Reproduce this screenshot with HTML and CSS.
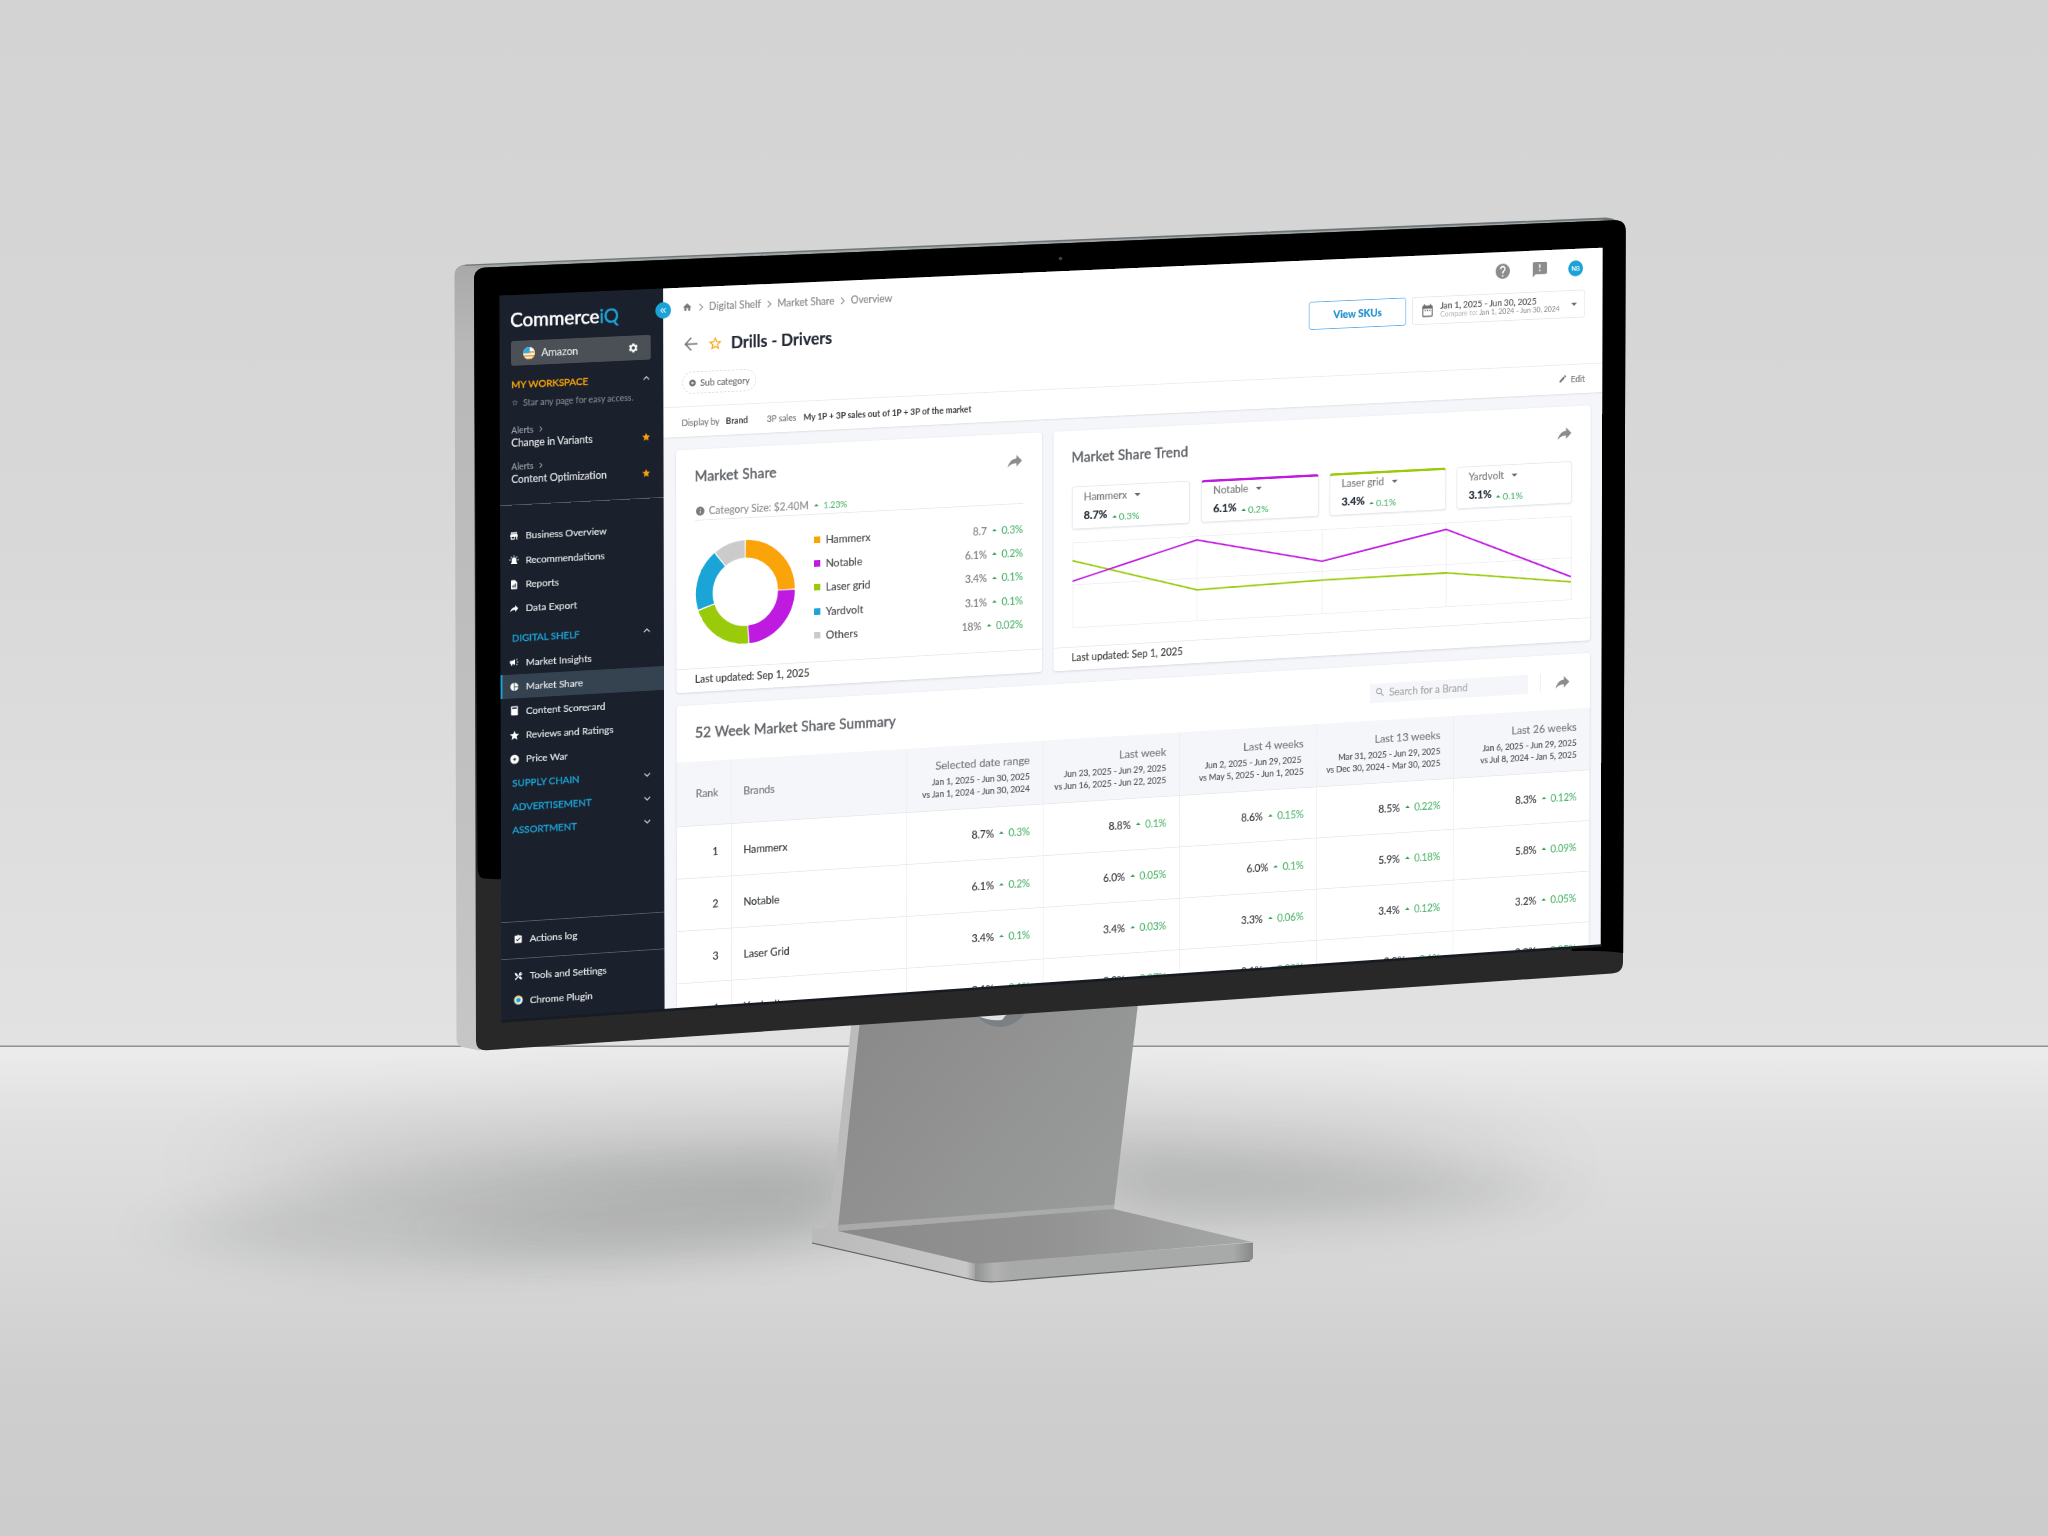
FILE: index.html
```html
<!DOCTYPE html>
<html lang="en">
<head>
    <meta charset="UTF-8">
    <meta name="viewport" content="width=device-width, initial-scale=1.0">
    <title>CommerceIQ - Market Share</title>
    <link rel="stylesheet" href="styles.css">
</head>
<body>
    <!-- shared icons -->
    <svg class="sprite">
        <symbol id="i-share" viewBox="0 0 24 24"><path d="M14 9V5l7 7-7 7v-4.1c-5 0-8.5 1.6-11 5.1 1-5 4-10 11-11z"/></symbol>
        <symbol id="i-star" viewBox="0 0 24 24"><path d="M12 17.27L18.18 21l-1.64-7.03L22 9.24l-7.19-.61L12 2 9.19 8.63 2 9.24l5.46 4.73L5.82 21z"/></symbol>
        <symbol id="i-star-o" viewBox="0 0 24 24"><path d="M22 9.24l-7.19-.62L12 2 9.19 8.63 2 9.24l5.46 4.73L5.82 21 12 17.27 18.18 21l-1.63-7.03L22 9.24zM12 15.4l-3.76 2.27 1-4.28-3.32-2.88 4.38-.38L12 6.1l1.71 4.04 4.38.38-3.32 2.88 1 4.28L12 15.4z"/></symbol>
        <symbol id="i-plus" viewBox="0 0 24 24"><path d="M12 2C6.48 2 2 6.48 2 12s4.48 10 10 10 10-4.48 10-10S17.52 2 12 2zm5 11h-4v4h-2v-4H7v-2h4V7h2v4h4v2z"/></symbol>
        <symbol id="i-right" viewBox="0 0 24 24"><path d="M8 4l8 8-8 8" fill="none" stroke="currentColor" stroke-width="2.4"/></symbol>
        <symbol id="i-up" viewBox="0 0 24 24"><path d="M4 16l8-8 8 8" fill="none" stroke="currentColor" stroke-width="3"/></symbol>
        <symbol id="i-down" viewBox="0 0 24 24"><path d="M4 8l8 8 8-8" fill="none" stroke="currentColor" stroke-width="3"/></symbol>
    </svg>

    <div class="scene">
        <svg class="monitor" viewBox="0 0 2048 1536">
            <defs>
                <linearGradient id="wall" x1="0" y1="0" x2="0" y2="1">
                    <stop offset="0" stop-color="#d3d3d3"/>
                    <stop offset=".5" stop-color="#d8d8d8"/>
                    <stop offset="1" stop-color="#e2e2e2"/>
                </linearGradient>
                <linearGradient id="floor" x1="0" y1="0" x2="0" y2="1">
                    <stop offset="0" stop-color="#ececec"/>
                    <stop offset=".15" stop-color="#e0e0e0"/>
                    <stop offset=".45" stop-color="#d7d7d7"/>
                    <stop offset=".7" stop-color="#cecece"/>
                    <stop offset="1" stop-color="#cccccc"/>
                </linearGradient>
                <linearGradient id="side" x1="0" y1="0" x2="0" y2="1">
                    <stop offset="0" stop-color="#a9a9a9"/>
                    <stop offset=".1" stop-color="#b8b8b8"/>
                    <stop offset="1" stop-color="#c6c6c6"/>
                </linearGradient>
                <linearGradient id="neck" x1="0" y1="0" x2="1" y2=".6">
                    <stop offset="0" stop-color="#888888"/>
                    <stop offset=".5" stop-color="#919191"/>
                    <stop offset="1" stop-color="#989b9a"/>
                </linearGradient>
                <linearGradient id="foot" x1="0" y1="0" x2="1" y2="0">
                    <stop offset="0" stop-color="#8a8a8a"/>
                    <stop offset=".5" stop-color="#929292"/>
                    <stop offset="1" stop-color="#a6a8a7"/>
                </linearGradient>
                <linearGradient id="footSide" x1="0" y1="0" x2="1" y2="0">
                    <stop offset="0" stop-color="#b9b9b9"/>
                    <stop offset=".92" stop-color="#c8c8c8"/>
                    <stop offset="1" stop-color="#8e8e8e"/>
                </linearGradient>
                <linearGradient id="footFront" x1="0" y1="0" x2="1" y2="0">
                    <stop offset="0" stop-color="#909191"/>
                    <stop offset=".07" stop-color="#b2b3b2"/>
                    <stop offset=".13" stop-color="#a8aaa9"/>
                    <stop offset=".93" stop-color="#a8aaa9"/>
                    <stop offset="1" stop-color="#868888"/>
                </linearGradient>
                <filter id="soft" x="-30%" y="-80%" width="160%" height="260%"><feGaussianBlur stdDeviation="40 20"/></filter>
                <filter id="softer" x="-30%" y="-120%" width="160%" height="340%"><feGaussianBlur stdDeviation="70 40"/></filter>
            </defs>

            <rect width="2048" height="1047" fill="url(#wall)"/>
            <rect y="1046" width="2048" height="490" fill="url(#floor)"/>
            <rect y="1045.5" width="2048" height="1.5" fill="#8f9090"/>

            <!-- floor shadows -->
            <ellipse cx="880" cy="1165" rx="640" ry="55" fill="#000" opacity=".1" filter="url(#softer)"/>
            <path d="M160 1230C300 1180 600 1140 860 1155L850 1235C640 1280 260 1290 160 1230z" fill="#2a3030" opacity=".11" filter="url(#soft)"/>
            <path d="M420 1235C560 1190 700 1165 850 1170L840 1235C700 1255 520 1270 420 1235z" fill="#2a3030" opacity=".07" filter="url(#soft)"/>
            <path d="M1090 1150C1250 1150 1450 1170 1580 1190C1450 1215 1280 1220 1130 1220z" fill="#2a3030" opacity=".12" filter="url(#soft)"/>

            <!-- stand -->
            <path d="M852 1018L861 1018L838 1232L976 1264V1280L812 1243V1227Q828 1232 830 1216z" fill="#bbbcbb"/>
            <path d="M812.5 1226.5V1243L970 1279Q976 1280.5 980 1280V1264L838 1230Q829 1224 826 1228Q820 1232 812.5 1226.5z" fill="url(#footSide)"/>
            <path d="M861 1010L1139 995L1114 1208L838 1228z" fill="url(#neck)"/>
            <path d="M838 1225L1114 1204.5V1209.5L838 1231z" fill="#a9abaa"/>
            <path d="M838 1231L1114 1209L1252 1242L990 1264Q980 1265 972 1263z" fill="url(#foot)"/>
            <path d="M975 1264L1253 1242.5V1257Q1253 1260 1248 1261L1000 1281.5Q984 1282.5 975 1280z" fill="url(#footFront)"/>
            <path d="M812 1243L976 1280.5Q985 1282.5 1000 1281.5L1250 1261" fill="none" stroke="#5c6162" stroke-width="1.2"/>
            <path d="M976 1014Q985 1027 1000 1027Q1016 1026 1026 1012z" fill="#7b8084"/>
            <path d="M976 1015Q986 1021 1002 1020L1010 1010z" fill="#e2e2e2"/>

            <!-- body -->
            <path d="M474 268L455 274Q455 266 466 264.5L1606 217.5Q1612 217.5 1618 221z" fill="#6f767b"/>
            <path d="M480 268L462 268L466 265.8L1600 219.5L1618 221.5z" fill="#a0a4a4"/>
            <path d="M454.5 275Q455 266 464 265.5L482 268.5L480 1050.5L462 1047Q456.5 1045 456.5 1039z" fill="url(#side)"/>
            <path d="M486 267.5L1614 220.3Q1625.7 219.8 1625.7 231L1623 962Q1623 972.5 1612 973.5L487 1050.3Q476 1051 476 1041L474 280Q474 268 486 267.5z" fill="#282828"/>
            <path d="M486 267.5L1614 220.3Q1625.7 219.8 1625.7 231L1623.2 953Q1600 950 1572 951L1560 900L502 870L502 879.5L484 878.5Q478 878 477.5 868L474 280Q474 268 486 267.5z" fill="#000"/>
            <circle cx="1060.5" cy="258.5" r="1.8" fill="#3b414b"/>
        </svg>

        <div class="screen">
            <aside class="sidebar">
                <div class="logo">Commerce<span>iQ</span></div>
                <div class="account">
                    <svg class="flag" viewBox="0 0 14 14"><clipPath id="round"><circle cx="7" cy="7" r="7"/></clipPath><g clip-path="url(#round)"><rect width="14" height="14" fill="#fff"/><path d="M0 5h14v2H0zM0 9h14v2H0zM0 12.5h14V14H0z" fill="#f2a12b"/><path d="M0 0h8v7H0z" fill="#35a7dc"/></g></svg>
                    <span>Amazon</span>
                    <svg class="gear" viewBox="0 0 24 24"><path d="M19.14 12.94c.04-.3.06-.61.06-.94 0-.32-.02-.64-.07-.94l2.03-1.58c.18-.14.23-.41.12-.61l-1.92-3.32c-.12-.22-.37-.29-.59-.22l-2.39.96c-.5-.38-1.03-.7-1.62-.94l-.36-2.54c-.04-.24-.24-.41-.48-.41h-3.84c-.24 0-.43.17-.47.41l-.36 2.54c-.59.24-1.13.57-1.62.94l-2.39-.96c-.22-.08-.47 0-.59.22L2.74 8.87c-.12.21-.08.47.12.61l2.03 1.58c-.05.3-.09.63-.09.94s.02.64.07.94l-2.03 1.58c-.18.14-.23.41-.12.61l1.92 3.32c.12.22.37.29.59.22l2.39-.96c.5.38 1.03.7 1.62.94l.36 2.54c.05.24.24.41.48.41h3.84c.24 0 .44-.17.47-.41l.36-2.54c.59-.24 1.13-.56 1.62-.94l2.39.96c.22.08.47 0 .59-.22l1.92-3.32c.12-.22.07-.47-.12-.61l-2.01-1.58zM12 15.6c-1.98 0-3.6-1.62-3.6-3.6s1.62-3.6 3.6-3.6 3.6 1.62 3.6 3.6-1.62 3.6-3.6 3.6z"/></svg>
                </div>
                <div class="section workspace"><span>MY WORKSPACE</span><svg class="chev"><use href="#i-up"/></svg></div>
                <div class="hint"><svg><use href="#i-star-o"/></svg>Star any page for easy access.</div>
                <div class="fav">
                    <div class="crumb">Alerts <svg><use href="#i-right"/></svg></div>
                    <div class="fav-name">Change in Variants <svg><use href="#i-star"/></svg></div>
                </div>
                <div class="fav">
                    <div class="crumb">Alerts <svg><use href="#i-right"/></svg></div>
                    <div class="fav-name">Content Optimization <svg><use href="#i-star"/></svg></div>
                </div>
                <nav class="nav top">
                    <a><svg viewBox="0 0 24 24"><path d="M20 3H4v3h16V3zm1.5 11v-2l-1-5h-17l-1 5v2h1v7h10v-7h4v7h3v-7h1zM12 18H6v-4h6v4z"/></svg>Business Overview</a>
                    <a><svg viewBox="0 0 24 24"><path d="M6 19v-7a6 6 0 0 1 12 0v7h2v3H4v-3zM11 1h2v3.5h-2zM3 5l1.5-1.5 2.5 2.5L5.5 7.5zM21 5l-1.5-1.5L17 6l1.5 1.5zM0 11h3.5v2H0zM20.5 11H24v2h-3.5z"/></svg>Recommendations</a>
                    <a><svg viewBox="0 0 24 24"><path fill-rule="evenodd" d="M6 1h8l6 6v14a2 2 0 0 1-2 2H6a2 2 0 0 1-2-2V3a2 2 0 0 1 2-2zM7.5 14v5h2v-5zM11 11.5V19h2v-7.5zM14.5 9v10h2V9z"/></svg>Reports</a>
                    <a><svg class="export"><use href="#i-share"/></svg>Data Export</a>
                </nav>
                <div class="section shelf"><span>DIGITAL SHELF</span><svg class="chev"><use href="#i-up"/></svg></div>
                <nav class="nav">
                    <a><svg viewBox="0 0 24 24"><path d="M18 11v2h4v-2h-4zm-2 6.61c.96.71 2.21 1.65 3.2 2.39l1.2-1.6-3.2-2.4-1.2 1.61zM20.4 5.6L19.2 4c-.99.74-2.24 1.68-3.2 2.4l1.2 1.6 3.2-2.4zM1 8.500v7h2.500V20h3.500v-4.500l7 3.500V5L7 8.500z"/></svg>Market Insights</a>
                    <a class="active"><svg viewBox="0 0 24 24"><path d="M11 2v20c-5.070-.5-9-4.790-9-10s3.930-9.500 9-10zm2.030 0v8.990H22c-.47-4.740-4.240-8.520-8.970-8.990zm0 11.010V22c4.740-.47 8.500-4.250 8.970-8.990h-8.970z"/></svg>Market Share</a>
                    <a><svg viewBox="0 0 24 24"><path fill-rule="evenodd" d="M5 1h14a1.500 1.500 0 0 1 1.500 1.500v19A1.500 1.500 0 0 1 19 23H5a1.500 1.500 0 0 1-1.500-1.500v-19A1.500 1.500 0 0 1 5 1zM6.500 4v3.500h11V4z"/></svg>Content Scorecard</a>
                    <a><svg class="rating"><use href="#i-star"/></svg>Reviews and Ratings</a>
                    <a><svg viewBox="0 0 24 24"><path fill-rule="evenodd" d="M12 1a11 11 0 1 0 0 22 11 11 0 0 0 0-22zM12 6.500l1.500 4 4 1.500-4 1.500-1.500 4-1.500-4-4-1.500 4-1.500z"/></svg>Price War</a>
                </nav>
                <div class="section group"><span>SUPPLY CHAIN</span><svg class="chev"><use href="#i-down"/></svg></div>
                <div class="section group"><span>ADVERTISEMENT</span><svg class="chev"><use href="#i-down"/></svg></div>
                <div class="section group"><span>ASSORTMENT</span><svg class="chev"><use href="#i-down"/></svg></div>
                <nav class="nav foot log">
                    <a><svg viewBox="0 0 24 24"><path d="M19 3h-4.180C14.400 1.840 13.300 1 12 1s-2.400.84-2.820 2H5c-1.100 0-2 .9-2 2v14c0 1.100.9 2 2 2h14c1.100 0 2-.9 2-2V5c0-1.100-.9-2-2-2zm-7 0c.55 0 1 .45 1 1s-.45 1-1 1-1-.45-1-1 .45-1 1-1zm-2 14l-4-4 1.410-1.410L10 14.170l6.590-6.590L18 9l-8 8z"/></svg>Actions log</a>
                </nav>
                <nav class="nav foot tools">
                    <a><svg viewBox="0 0 24 24"><path d="M3 5l2-2 5 4v2.500l3.500 3.500-2 2L8 11.500H6zM14 14l2.500-2 5.500 5.500-3.500 3.500-5.500-5.500zM14 9.500a5 5 0 0 1 6-7L17.500 5 19 6.500 21.500 4a5 5 0 0 1-6.500 6.500L5.500 21 3 18.500z"/></svg>Tools and Settings</a>
                    <a><svg viewBox="0 0 24 24"><circle cx="12" cy="12" r="11" fill="#e7eef0"/><path d="M2.500 6.500A11 11 0 0 1 21.500 6.500z" fill="#f0c04a"/><path d="M2.500 6.500A11 11 0 0 0 11 23l3-7z" fill="#a5d0a0"/><circle cx="12" cy="12" r="7.500" fill="#fff"/><circle cx="12" cy="12" r="5.500" fill="#1ba2d6"/></svg>Chrome Plugin</a>
                </nav>
                <span class="collapse"><svg viewBox="0 0 24 24"><path d="M11.500 5l-7 7 7 7M19.500 5l-7 7 7 7" fill="none" stroke="currentColor" stroke-width="2.500"/></svg></span>
            </aside>

            <main class="main">
                <header class="header">
                    <div class="topbar">
                        <div class="breadcrumb">
                            <svg class="home" viewBox="0 0 24 24"><path d="M10 20v-6h4v6h5v-8h3L12 3 2 12h3v8z"/></svg>
                            <svg class="sep"><use href="#i-right"/></svg><span>Digital Shelf</span>
                            <svg class="sep"><use href="#i-right"/></svg><span>Market Share</span>
                            <svg class="sep"><use href="#i-right"/></svg><span>Overview</span>
                        </div>
                        <div class="tools-right">
                            <svg viewBox="0 0 24 24"><path d="M12 2C6.480 2 2 6.480 2 12s4.480 10 10 10 10-4.480 10-10S17.520 2 12 2zm1 17h-2v-2h2v2zm2.070-7.750l-.9.92C13.450 12.900 13 13.500 13 15h-2v-.5c0-1.100.45-2.100 1.170-2.830l1.240-1.260c.37-.36.59-.86.59-1.410 0-1.100-.9-2-2-2s-2 .9-2 2H8c0-2.210 1.790-4 4-4s4 1.790 4 4c0 .88-.36 1.680-.93 2.250z"/></svg>
                            <svg viewBox="0 0 24 24"><path d="M20 2H4c-1.100 0-1.990.9-1.990 2L2 22l4-4h14c1.100 0 2-.9 2-2V4c0-1.100-.9-2-2-2zm-7 12h-2v-2h2v2zm0-4h-2V5h2v5z"/></svg>
                            <span class="avatar">NB</span>
                        </div>
                    </div>
                    <div class="title-row">
                        <svg class="back" viewBox="0 0 24 24"><path d="M22 12H3M12 2.500L2.500 12l9.500 9.500" fill="none" stroke="currentColor" stroke-width="2.300"/></svg>
                        <svg class="fav-star"><use href="#i-star-o"/></svg>
                        <h1>Drills - Drivers</h1>
                        <button class="skus">View SKUs</button>
                        <div class="dates">
                            <svg viewBox="0 0 24 24"><path d="M9 11H7v2h2v-2zm4 0h-2v2h2v-2zm4 0h-2v2h2v-2zm2-7h-1V2h-2v2H8V2H6v2H5c-1.110 0-1.990.9-1.990 2L3 20c0 1.100.89 2 2 2h14c1.100 0 2-.9 2-2V6c0-1.100-.9-2-2-2zm0 16H5V9h14v11z"/></svg>
                            <div>
                                <p class="range">Jan 1, 2025 - Jun 30, 2025</p>
                                <p class="compare">Compare to: <b>Jan 1, 2024 - Jun 30, 2024</b></p>
                            </div>
                            <i class="caret"></i>
                        </div>
                    </div>
                    <div class="chip"><svg><use href="#i-plus"/></svg>Sub category</div>
                </header>
                <div class="filters">
                    <span class="f-label">Display by</span><b class="f-brand">Brand</b>
                    <span class="f-label sales">3P sales</span><b>My 1P + 3P sales out of 1P + 3P of the market</b>
                    <span class="edit"><svg viewBox="0 0 24 24"><path d="M3 17.250V21h3.750L17.810 9.940l-3.750-3.750L3 17.250zM20.710 7.040c.39-.39.39-1.020 0-1.410l-2.340-2.340c-.39-.39-1.020-.39-1.410 0l-1.830 1.830 3.750 3.750 1.830-1.830z"/></svg>Edit</span>
                </div>

                <div class="cards">
                    <section class="card share-card">
                        <div class="card-body">
                            <div class="card-head"><h2>Market Share</h2><svg class="share"><use href="#i-share"/></svg></div>
                            <div class="category">
                                <svg viewBox="0 0 24 24"><path d="M12 2C6.480 2 2 6.480 2 12s4.480 10 10 10 10-4.480 10-10S17.520 2 12 2zm1 15h-2v-6h2v6zm0-8h-2V7h2v2z"/></svg>
                                <span>Category Size: $2.40M</span><em>1.23%</em>
                            </div>
                            <div class="donut-row">
                                <svg class="donut" viewBox="0 0 128 128">
                                    <g fill="none" stroke-width="21.500" transform="rotate(-90 64 64)">
                                        <circle cx="64" cy="64" r="52.500" pathLength="360" stroke="#faa40a" stroke-dasharray="88.500 271.500" stroke-dashoffset="-.75"/>
                                        <circle cx="64" cy="64" r="52.500" pathLength="360" stroke="#bf1be0" stroke-dasharray="84.500 275.500" stroke-dashoffset="-90.750"/>
                                        <circle cx="64" cy="64" r="52.500" pathLength="360" stroke="#99cb0a" stroke-dasharray="74.500 285.500" stroke-dashoffset="-176.750"/>
                                        <circle cx="64" cy="64" r="52.500" pathLength="360" stroke="#1ba5d6" stroke-dasharray="68.500 291.500" stroke-dashoffset="-252.750"/>
                                        <circle cx="64" cy="64" r="52.500" pathLength="360" stroke="#cbcbcb" stroke-dasharray="36.500 323.500" stroke-dashoffset="-322.750"/>
                                    </g>
                                </svg>
                                <ul class="legend">
                                    <li><i class="sq orange"></i>Hammerx<span>8.7</span><em>0.3%</em></li>
                                    <li><i class="sq purple"></i>Notable<span>6.1%</span><em>0.2%</em></li>
                                    <li><i class="sq green"></i>Laser grid<span>3.4%</span><em>0.1%</em></li>
                                    <li><i class="sq blue"></i>Yardvolt<span>3.1%</span><em>0.1%</em></li>
                                    <li><i class="sq grey"></i>Others<span>18%</span><em>0.02%</em></li>
                                </ul>
                            </div>
                        </div>
                        <div class="card-foot">Last updated: Sep 1, 2025</div>
                    </section>

                    <section class="card trend-card">
                        <div class="card-body">
                            <div class="card-head"><h2>Market Share Trend</h2><svg class="share"><use href="#i-share"/></svg></div>
                            <div class="picks">
                                <div class="pick"><p>Hammerx<i class="caret"></i></p><b>8.7%</b><em>0.3%</em></div>
                                <div class="pick p-purple"><p>Notable<i class="caret"></i></p><b>6.1%</b><em>0.2%</em></div>
                                <div class="pick p-green"><p>Laser grid<i class="caret"></i></p><b>3.4%</b><em>0.1%</em></div>
                                <div class="pick"><p>Yardvolt<i class="caret"></i></p><b>3.1%</b><em>0.1%</em></div>
                            </div>
                            <svg class="chart" viewBox="0 0 665 106">
                                <path d="M.5.5h664v105H.5zM.5 52.500h664M163.500.5v105M329.500.5v105M495.500.5v105" fill="none" stroke="#eeeff4"/>
                                <polyline points="0,22.500 163.500,67 329.500,63.500 495.500,63 664,83" fill="none" stroke="#99cb0a" stroke-width="2"/>
                                <polyline points="0,48 163.500,5 329.500,40 495.500,8.500 664,76.500" fill="none" stroke="#bf1be0" stroke-width="2"/>
                            </svg>
                        </div>
                        <div class="card-foot">Last updated: Sep 1, 2025</div>
                    </section>
                </div>

                <section class="card summary">
                    <div class="summary-head">
                        <h2>52 Week Market Share Summary</h2>
                        <div class="search"><svg viewBox="0 0 24 24"><path d="M15.500 14h-.79l-.28-.27C15.410 12.590 16 11.110 16 9.500 16 5.910 13.090 3 9.500 3S3 5.910 3 9.500 5.910 16 9.500 16c1.610 0 3.090-.59 4.230-1.570l.27.28v.79l5 4.990L20.490 19l-4.990-5zm-6 0C7.010 14 5 11.990 5 9.500S7.010 5 9.500 5 14 7.010 14 9.500 11.990 14 9.500 14z"/></svg>Search for a Brand</div>
                        <span class="rule"></span>
                        <svg class="share"><use href="#i-share"/></svg>
                    </div>
                    <div class="row head">
                        <div class="rank">Rank</div>
                        <div class="brand">Brands</div>
                        <div><h3>Selected date range</h3><p>Jan 1, 2025 - Jun 30, 2025</p><p>vs Jan 1, 2024 - Jun 30, 2024</p></div>
                        <div><h3>Last week</h3><p>Jun 23, 2025 - Jun 29, 2025</p><p>vs Jun 16, 2025 - Jun 22, 2025</p></div>
                        <div><h3>Last 4 weeks</h3><p class="inset">Jun 2, 2025 - Jun 29, 2025</p><p>vs May 5, 2025 - Jun 1, 2025</p></div>
                        <div><h3>Last 13 weeks</h3><p>Mar 31, 2025 - Jun 29, 2025</p><p>vs Dec 30, 2024 - Mar 30, 2025</p></div>
                        <div><h3>Last 26 weeks</h3><p>Jan 6, 2025 - Jun 29, 2025</p><p>vs Jul 8, 2024 - Jan 5, 2025</p></div>
                    </div>
                    <div class="row">
                        <div class="rank">1</div><div class="brand">Hammerx</div>
                        <div>8.7%<em>0.3%</em></div><div>8.8%<em>0.1%</em></div><div>8.6%<em>0.15%</em></div><div>8.5%<em>0.22%</em></div><div>8.3%<em>0.12%</em></div>
                    </div>
                    <div class="row">
                        <div class="rank">2</div><div class="brand">Notable</div>
                        <div>6.1%<em>0.2%</em></div><div>6.0%<em>0.05%</em></div><div>6.0%<em>0.1%</em></div><div>5.9%<em>0.18%</em></div><div>5.8%<em>0.09%</em></div>
                    </div>
                    <div class="row">
                        <div class="rank">3</div><div class="brand">Laser Grid</div>
                        <div>3.4%<em>0.1%</em></div><div>3.4%<em>0.03%</em></div><div>3.3%<em>0.06%</em></div><div>3.4%<em>0.12%</em></div><div>3.2%<em>0.05%</em></div>
                    </div>
                    <div class="row">
                        <div class="rank">4</div><div class="brand">Yardvolt</div>
                        <div>3.1%<em>0.1%</em></div><div>3.0%<em>0.07%</em></div><div>3.1%<em>0.02%</em></div><div>3.0%<em>0.1%</em></div><div>3.0%<em>0.05%</em></div>
                    </div>
                </section>
            </main>
        </div>

        <!-- inner lip of the bezel, smooths the panel edges -->
        <svg class="lip" viewBox="0 0 2048 1536">
            <path d="M500 870L498.3 294.5L1603.8 246.5L1601.8 946" fill="none" stroke="#000" stroke-width="2.200"/>
            <path d="M500.500 1021.500L1601.800 945.500" fill="none" stroke="#171b22" stroke-width="2.600"/>
            <path d="M499.800 879L500.300 1022" fill="none" stroke="#282828" stroke-width="2"/>
        </svg>
    </div>
</body>
</html>
```
FILE: styles.css
```css
* {
    box-sizing: border-box;
}
body {
    margin: 0;
    background-color: #d3d3d3;
    font-family: Lato, "Liberation Sans", sans-serif;
}
h1, h2, h3, p, ul {
    margin: 0;
    padding: 0;
}
svg {
    display: block;
    fill: currentColor;
    flex: none;
}
.sprite {
    display: none;
}
.scene {
    position: relative;
    width: 2048px;
    height: 1536px;
    overflow: hidden;
}
.monitor {
    width: 2048px;
    height: 1536px;
}
.lip {
    position: absolute;
    top: 0;
    left: 0;
    width: 2048px;
    height: 1536px;
}
/* flat 1440x880 page, laid onto the tilted panel */
.screen {
    position: absolute;
    top: 0;
    left: 0;
    width: 1440px;
    height: 880px;
    display: flex;
    overflow: hidden;
    background-color: #f5f6fa;
    color: #3c4043;
    -webkit-text-stroke: 0.2px currentColor;
    transform-origin: 0 0;
    transform: matrix3d(0.811792, -0.0263715, 0, 0.00002815, 0.0043852, 0.828964, 0, 0.000004216, 0, 0, 1, 0, 499, 295.3, 0, 1);
}
em {
    display: inline-flex;
    align-items: center;
    font-style: normal;
    color: #4fb56d;
    -webkit-text-stroke-width: 0.1px;
}
em::before {
    content: "";
    border: 3px solid transparent;
    border-top: 0;
    border-bottom: 3.5px solid #2f9e50;
    margin: 0 6px 0 7px;
}
.caret {
    display: inline-block;
    border: 4px solid transparent;
    border-bottom: 0;
    border-top: 4px solid #6a6a6a;
}

/* sidebar */
.sidebar {
    position: relative;
    z-index: 2;
    width: 207px;
    height: 880px;
    flex: none;
    display: flex;
    flex-direction: column;
    background-color: #1b212c;
    color: #e3e5e8;
    font-size: 12.3px;
}
.logo {
    height: 56px;
    padding: 14px 0 0 14px;
    font-size: 23.7px;
    line-height: 32px;
    color: #fff;
    -webkit-text-stroke: 0.6px currentColor;
}
.logo span {
    color: #1ba2d6;
}
.account {
    display: flex;
    align-items: center;
    height: 30px;
    margin: 0 16px 0 15px;
    padding: 0 15px;
    border-radius: 3px;
    background-color: #4a5056;
    font-size: 13px;
}
.flag {
    width: 15px;
    height: 15px;
    margin-right: 8px;
}
.gear {
    width: 14px;
    height: 14px;
    margin-left: auto;
    color: #fff;
}
.section {
    display: flex;
    align-items: center;
    justify-content: space-between;
    padding: 0 16px 0 15px;
    color: #1ba2d6;
    -webkit-text-stroke: 0.4px currentColor;
}
.section .chev {
    width: 11px;
    height: 11px;
    color: #c5c8cc;
}
.workspace {
    height: 22px;
    margin-top: 11px;
    color: #faa40a;
}
.hint {
    display: flex;
    align-items: center;
    height: 22px;
    padding-left: 15px;
    margin-bottom: 15px;
    color: #7d838a;
    font-size: 10.8px;
}
.hint svg {
    width: 9px;
    height: 9px;
    margin-right: 6px;
}
.fav {
    height: 44.3px;
    padding: 0 16px 0 15px;
}
.crumb {
    display: flex;
    align-items: center;
    gap: 5px;
    height: 15px;
    font-size: 10.7px;
    color: #979ca3;
}
.crumb svg {
    width: 8px;
    height: 8px;
    color: #d0d2d5;
}
.fav-name {
    display: flex;
    align-items: center;
    justify-content: space-between;
    height: 17px;
    font-size: 12.6px;
}
.fav-name svg {
    width: 12px;
    height: 12px;
    color: #faa40a;
}
.nav a {
    display: flex;
    align-items: center;
    height: 29.4px;
    padding-left: 12px;
}
.nav svg {
    width: 12px;
    height: 12px;
    margin-right: 8.5px;
    color: #fff;
}
.nav .export, .nav .rating {
    width: 14px;
    height: 14px;
    margin-left: -1px;
    margin-right: 7.5px;
}
.nav.top {
    padding-top: 22.5px;
    margin-top: 9px;
    border-top: 1px solid #565c64;
}
.nav a.active {
    background-color: #35424f;
    border-left: 3px solid #1ba2d6;
    padding-left: 9px;
}
.shelf {
    height: 36px;
    padding-top: 6px;
}
.group {
    height: 28.5px;
}
.foot {
    border-top: 1px solid #565c64;
}
.nav.foot a {
    padding-left: 16px;
}
.log {
    margin-top: auto;
    padding-top: 5.5px;
    height: 44.6px;
}
.tools {
    padding-top: 6px;
    height: 75px;
}
.collapse {
    position: absolute;
    top: 17px;
    right: -10px;
    width: 20px;
    height: 20px;
    padding: 5px;
    border-radius: 50%;
    background-color: #1ba2d6;
    color: #fff;
}

/* page header */
.main {
    flex: 1;
    display: flex;
    flex-direction: column;
}
.header {
    flex: none;
    height: 145px;
    background-color: #fff;
}
.topbar {
    display: flex;
    justify-content: space-between;
    height: 52px;
    padding: 0 27px 0 24px;
}
.breadcrumb {
    display: flex;
    align-items: center;
    height: 49px;
    font-size: 12.5px;
    color: #8b8b8b;
}
.home {
    width: 13px;
    height: 13px;
    color: #7a7a7a;
}
.sep {
    width: 12px;
    height: 12px;
    margin: 0 4px 0 5px;
}
.tools-right {
    display: flex;
    align-items: center;
    gap: 27px;
    height: 49px;
    color: #8c8c8c;
}
.tools-right svg {
    width: 23px;
    height: 23px;
}
.avatar {
    width: 20px;
    height: 20px;
    border-radius: 50%;
    background-color: #1ba2d6;
    color: #fff;
    font-size: 8px;
    line-height: 20px;
    text-align: center;
}
.title-row {
    display: flex;
    align-items: center;
    height: 35px;
    padding: 0 24px 0 26px;
}
.back {
    width: 19px;
    height: 19px;
    color: #7a7a7a;
}
.fav-star {
    width: 20px;
    height: 20px;
    margin: 0 10px 0 11px;
    color: #faa40a;
}
h1 {
    font-size: 20.2px;
    line-height: 22px;
    font-weight: 700;
    color: #242b37;
    flex: 1;
    padding-bottom: 2px;
}
.skus {
    width: 130px;
    height: 35px;
    margin-right: 8px;
    padding-bottom: 3px;
    border: 1.5px solid #5fb0f0;
    border-radius: 4px;
    background-color: #fff;
    color: #1b8fd2;
    font-family: inherit;
    font-size: 13.2px;
    font-weight: 700;
}
.dates {
    display: flex;
    align-items: center;
    width: 233px;
    height: 35px;
    padding: 0 10px;
    border: 1px solid #e6e7ec;
    border-radius: 3px;
}
.dates svg {
    width: 19px;
    height: 19px;
    margin-right: 7.5px;
    color: #6f6f6f;
}
.dates > div {
    flex: 1;
    white-space: nowrap;
    padding-bottom: 1px;
}
.range {
    font-size: 11.1px;
    line-height: 12px;
    color: #555;
}
.compare {
    font-size: 9.3px;
    line-height: 10px;
    color: #b3b3b3;
    -webkit-text-stroke-width: 0;
}
.compare b {
    font-weight: 400;
    color: #858585;
}
.chip {
    display: inline-flex;
    align-items: center;
    height: 27px;
    margin: 16px 0 0 24px;
    padding: 0 7px 0 7px;
    border: 1px dashed #dcdcdc;
    border-radius: 14px;
    font-size: 11px;
    color: #6f6f6f;
}
.chip svg {
    width: 10px;
    height: 10px;
    margin-right: 5px;
}
.filters {
    flex: none;
    display: flex;
    align-items: center;
    height: 37px;
    padding: 0 24px 0 23px;
    border-top: 1px solid #ebecf0;
    background-color: #fff;
    box-shadow: 0 1px 2px rgba(0, 0, 0, 0.1);
    font-size: 10.7px;
}
.filters b {
    -webkit-text-stroke-width: 0;
}
.f-label {
    color: #7c7c7c;
}
.f-brand {
    margin: 0 24px 0 8px;
}
.sales {
    margin-right: 9px;
}
.edit {
    display: flex;
    align-items: center;
    margin-left: auto;
    padding-bottom: 2px;
    font-size: 11.3px;
    color: #777;
}
.edit svg {
    width: 12px;
    height: 12px;
    margin-right: 5px;
}

/* cards */
.cards {
    flex: none;
    display: flex;
    gap: 15px;
    padding: 16px 16px 0;
}
.card {
    background-color: #fff;
    border-radius: 4px;
    box-shadow: 0 1px 3px rgba(40, 45, 60, 0.16);
}
.cards .card {
    height: 296px;
}
.share-card {
    width: 471px;
}
.trend-card {
    width: 715px;
}
.card-body {
    height: 267px;
    padding: 0 25px 0 23.5px;
}
.card-head {
    display: flex;
    align-items: center;
    justify-content: space-between;
    height: 67px;
}
.card-head .share {
    margin-right: -1.5px;
}
h2 {
    font-size: 17.4px;
    letter-spacing: 0.25px;
    font-weight: 400;
    color: #63666a;
    padding-bottom: 1.5px;
    -webkit-text-stroke: 0.5px currentColor;
}
.share {
    width: 25px;
    height: 25px;
    color: #8c8c8c;
}
.card-foot {
    height: 29px;
    padding-left: 23.5px;
    border-top: 1px solid #e8e9ed;
    font-size: 12.8px;
    line-height: 25px;
    color: #444;
}
.category {
    display: flex;
    align-items: center;
    height: 20px;
    padding-bottom: 3px;
    border-bottom: 1px solid #e8e9ed;
    font-size: 12.8px;
    color: #909090;
}
.category svg {
    width: 13px;
    height: 13px;
    margin-right: 5px;
    color: #7a7a7a;
}
.category em {
    font-size: 11px;
}
.donut-row {
    display: flex;
    padding-top: 26px;
}
.donut {
    width: 128px;
    height: 128px;
}
.legend {
    flex: 1;
    list-style: none;
    padding-left: 24px;
    margin-top: -10px;
    font-size: 13.5px;
}
.legend li {
    display: flex;
    align-items: center;
    height: 29.3px;
    color: #4c4f52;
}
.legend span {
    margin-left: auto;
    color: #808080;
    font-size: 13px;
}
.legend em, .row em {
    font-size: 13px;
    letter-spacing: -0.2px;
}
.pick em {
    font-size: 12.3px;
}
.sq {
    width: 8.5px;
    height: 8px;
    margin-right: 7px;
}
.orange {
    background-color: #faa40a;
}
.purple {
    background-color: #bf1be0;
}
.green {
    background-color: #99cb0a;
}
.blue {
    background-color: #1ba5d6;
}
.grey {
    background-color: #cbcbcb;
}
.picks {
    display: flex;
    gap: 14.5px;
    margin-top: 2px;
}
.pick {
    flex: 1;
    height: 53px;
    padding: 2px 15px 0;
    border: 1px solid #e6e7ec;
    border-radius: 4px;
    box-shadow: 0 1px 2px rgba(40, 45, 60, 0.1);
}
.pick p {
    font-size: 13.3px;
    line-height: 21px;
    color: #808080;
}
.pick p .caret {
    margin-left: 10px;
    vertical-align: 2px;
}
.pick b {
    font-size: 14px;
    line-height: 23px;
    color: #242b37;
}
.pick em::before {
    margin: 0 3px 0 6px;
}
.p-purple {
    border-top: 3px solid #bf1be0;
    padding-top: 0;
}
.p-green {
    border-top: 3px solid #99cb0a;
    padding-top: 0;
}
.chart {
    width: 666.5px;
    height: 106px;
    margin-top: 15.5px;
}

/* summary table */
.summary {
    width: 1201px;
    height: 500px;
    flex: none;
    margin: 16px 0 0 16px;
}
.summary-head {
    display: flex;
    align-items: center;
    height: 69px;
    padding: 0 25px 0 23.5px;
}
.summary-head h2 {
    flex: 1;
}
.search {
    display: flex;
    align-items: center;
    width: 213px;
    height: 24px;
    padding: 0 0 1px 7px;
    background-color: #f5f6fa;
    font-size: 13.1px;
    color: #a9a9a9;
}
.search svg {
    width: 14px;
    height: 14px;
    margin-right: 5px;
    color: #999;
}
.rule {
    width: 1px;
    height: 24px;
    margin: 0 17px 0 16px;
    background-color: #e8e9ed;
}
.row {
    display: grid;
    grid-template-columns: 70px 225px 178px 179px 182px 183px 184px;
    height: 64px;
    font-size: 13.2px;
    border-bottom: 1px solid #e8e9ed;
}
.row > div {
    display: flex;
    align-items: center;
    justify-content: flex-end;
    padding-right: 17px;
    border-right: 1px solid #eeeff3;
}
.row > .brand {
    justify-content: flex-start;
    padding-left: 15px;
}
.row > .rank {
    padding-right: 16px;
}
.head {
    height: 79px;
    background-color: #f5f6fa;
    color: #7c7c7c;
}
.head > div {
    flex-direction: column;
    align-items: flex-end;
    justify-content: center;
}
.head > .rank, .head > .brand {
    flex-direction: row;
    align-items: center;
}
.head > .rank {
    justify-content: flex-end;
}
h3 {
    font-size: 14.2px;
    font-weight: 400;
    line-height: 20px;
    margin-bottom: 2px;
}
.head p {
    font-size: 10.9px;
    line-height: 15px;
    color: #55585c;
    white-space: nowrap;
}
.head p.inset {
    padding-right: 3px;
}
```
